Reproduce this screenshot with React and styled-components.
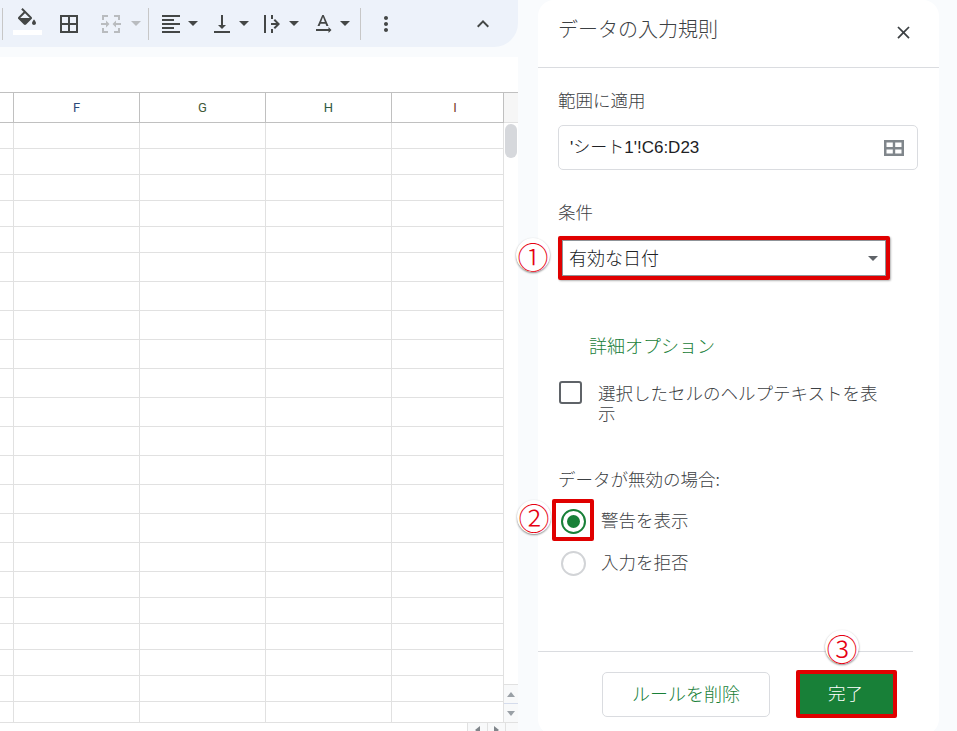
import styled, { createGlobalStyle } from "styled-components";

const COLUMNS = ["F", "G", "H", "I"];
const ROW_HEIGHTS = [
  ...Array(5).fill(26),
  ...Array(11).fill(29),
  ...Array(5).fill(26),
  21,
];
const HEADER_COLORS = { F: "#2b4a7a", G: "#3f5a3a", H: "#2f5a45", I: "#7a3b2e" };

const GlobalStyle = createGlobalStyle`
  html, body {
    margin: 0;
    height: 100%;
    overflow: hidden;
    background: #f9fbfd;
  }
  * { box-sizing: border-box; }
`;

const Page = styled.div`
  width: 957px;
  height: 731px;
  display: flex;
  overflow: hidden;
  background: #f9fbfd;
  font-family: "Liberation Sans", "Noto Sans CJK JP", sans-serif;
  color: #3c4043;
`;

const SheetColumn = styled.div`
  width: 518px;
  flex: none;
  display: flex;
  flex-direction: column;
`;

const Toolbar = styled.div`
  height: 47px;
  flex: none;
  display: flex;
  align-items: center;
  background: #edf2fa;
  border-bottom-right-radius: 24px;
  color: #444746;
`;

const Separator = styled.div`
  width: 1px;
  height: 32px;
  flex: none;
  margin-left: ${(p) => p.$ml}px;
  background: #c7c7c7;
`;

const ToolIcon = styled.svg`
  width: 24px;
  height: 24px;
  flex: none;
  margin-left: ${(p) => p.$ml}px;
  fill: currentColor;
  color: ${(p) => (p.$disabled ? "#b9bcbf" : "inherit")};
`;

const FillButton = styled.div`
  width: 29px;
  height: 47px;
  flex: none;
  margin-left: 10px;
  padding: 8px 0 0 2px;
  position: relative;
  &::after {
    content: "";
    position: absolute;
    left: 0;
    right: 0;
    top: 30px;
    height: 5px;
    background: #fff;
  }
`;

const Caret = styled.div`
  width: 0;
  height: 0;
  flex: none;
  margin-left: ${(p) => p.$ml}px;
  border-left: 5.5px solid transparent;
  border-right: 5.5px solid transparent;
  border-top: 5.5px solid ${(p) => (p.$disabled ? "#b9bcbf" : "#444746")};
`;

const ToolbarGap = styled.div`
  height: 10px;
  flex: none;
`;

const FormulaBar = styled.div`
  height: 35px;
  flex: none;
  background: #fff;
`;

const Sheet = styled.div`
  flex: 1;
  display: flex;
  flex-direction: column;
  background: #fff;
  min-height: 0;
`;

const SheetBody = styled.div`
  display: flex;
`;

const Cells = styled.div`
  width: 504px;
  flex: none;
`;

const GridRow = styled.div`
  display: grid;
  grid-template-columns: 14px 126px 126px 126px 112px;
  border-bottom: 1px solid ${(p) => (p.$head ? "#c0c0c0" : "#e1e1e1")};
`;

const HeaderRow = styled(GridRow)`
  height: 31px;
  border-top: 1px solid #c0c0c0;
`;

const Cell = styled.div`
  border-right: 1px solid ${(p) => (p.$head ? "#c0c0c0" : "#e1e1e1")};
`;

const HeaderCell = styled(Cell)`
  display: flex;
  align-items: center;
  justify-content: center;
  padding-left: ${(p) => p.$pad || 0}px;
  font-family: "Roboto", "Liberation Sans", sans-serif;
  font-size: 13px;
  color: ${(p) => p.$color};
`;

const Gutter = styled.div`
  width: 14px;
  flex: none;
  display: flex;
  flex-direction: column;
`;

const GutterHead = styled.div`
  height: 31px;
  flex: none;
  background: #f6f6f6;
  border-top: 1px solid #c0c0c0;
  border-bottom: 1px solid #e1e1e1;
`;

const Thumb = styled.div`
  width: 12px;
  height: 34px;
  margin: 1px 0 0 1px;
  border-radius: 6px;
  background: #d6d8dc;
`;

const ScrollArrows = styled.div`
  margin-top: auto;
  height: 39px;
  display: flex;
  flex-direction: column;
  background: #f8f9fa;
  border-top: 1px solid #e1e1e1;
`;

const ScrollArrow = styled.div`
  flex: 1;
  display: flex;
  align-items: center;
  justify-content: center;
  border-bottom: 1px solid ${(p) => (p.$up ? "#d5dcec" : "#e1e1e1")};
  &::before {
    content: "";
    border-left: 4px solid transparent;
    border-right: 4px solid transparent;
    ${(p) => (p.$up ? "border-bottom" : "border-top")}: 5px solid #9aa0a6;
  }
`;

const BottomBar = styled.div`
  height: 9px;
  flex: none;
  display: flex;
  justify-content: flex-end;
  background: #fff;
`;

const PageArrow = styled.div`
  width: ${(p) => p.$w}px;
  display: flex;
  justify-content: center;
  padding-top: 3px;
  background: #f8f9fa;
  border-left: 1px solid #e1e1e1;
  &::before {
    content: "";
    height: 0;
    border-top: 4px solid transparent;
    border-bottom: 4px solid transparent;
    ${(p) => (p.$left ? "border-right" : "border-left")}: 5px solid #80868b;
  }
`;

const BottomEnd = styled.div`
  width: 13px;
  background: #f8f9fa;
  border-left: 1px solid #e1e1e1;
`;

const Panel = styled.aside`
  width: 401px;
  height: 735px;
  flex: none;
  margin-left: 20px;
  display: flex;
  flex-direction: column;
  background: #fff;
  border-radius: 16px;
  font-family: "Noto Sans CJK JP", "Liberation Sans", sans-serif;
  font-size: 17.5px;
  font-weight: 300;
`;

const PanelHeader = styled.div`
  height: 68px;
  flex: none;
  display: flex;
  align-items: center;
  justify-content: space-between;
  padding: 0 25px 10px 20px;
  border-bottom: 1px solid #dadce0;
`;

const PanelTitle = styled.h2`
  margin: 0;
  font-size: 20px;
  font-weight: 300;
  line-height: 28px;
  color: #3c4043;
`;

const CloseIcon = styled.svg`
  width: 21px;
  height: 21px;
  margin-top: 7px;
  fill: #3c4043;
`;

const PanelBody = styled.div`
  padding: 19px 21px 0 20px;
  display: flex;
  flex-direction: column;
`;

const FieldLabel = styled.div`
  line-height: 26px;
  color: #3c4043;
`;

const RangeField = styled.div`
  height: 45px;
  margin-top: 12px;
  padding: 0 11px 0 11px;
  display: flex;
  align-items: center;
  justify-content: space-between;
  border: 1px solid #dadce0;
  border-radius: 5px;
  font-family: "Liberation Sans", "Noto Sans CJK JP", sans-serif;
  font-size: 17px;
  font-weight: 300;
  color: #202124;
`;

const RangeText = styled.span`
  margin-top: -4px;
`;

const RangeIcon = styled.svg`
  width: 24px;
  height: 24px;
  margin-top: 1px;
  fill: #80868b;
`;

const ConditionLabel = styled(FieldLabel)`
  margin-top: 29px;
`;

const SelectBox = styled.div`
  position: relative;
  width: 332px;
  height: 44px;
  margin-top: 11px;
  padding: 0 8px 2px 7px;
  display: flex;
  align-items: center;
  justify-content: space-between;
  border: 4px solid #e00000;
  box-shadow: 1px 1px 2px rgba(0, 0, 0, 0.3), inset 0 0 0 1px #8f9398;
  border-radius: 2px;
  font-size: 18px;
  color: #202124;
`;

const SelectCaret = styled.div`
  margin-top: 2px;
  border-left: 5.5px solid transparent;
  border-right: 5.5px solid transparent;
  border-top: 5px solid #5f6368;
`;

const Badge = styled.div`
  position: absolute;
  left: ${(p) => p.$x}px;
  top: ${(p) => p.$y}px;
  width: 34px;
  height: 34px;
  display: flex;
  align-items: center;
  justify-content: center;
  border-radius: 50%;
  background: #fff;
  box-shadow: 0 1px 2px rgba(0, 0, 0, 0.45);
  color: #e60012;
  font-family: "Noto Sans CJK JP", sans-serif;
  font-size: 31px;
  font-weight: 300;
  line-height: 1;
`;

const AdvancedLink = styled.div`
  margin: 52px 0 0 31px;
  line-height: 26px;
  font-size: 18px;
  color: #188038;
`;

const CheckRow = styled.div`
  margin-top: 21px;
  display: flex;
  gap: 16px;
`;

const CheckBox = styled.div`
  width: 23px;
  height: 23px;
  flex: none;
  margin: 2px 0 0 1px;
  border: 2px solid #5f6368;
  border-radius: 3px;
`;

const CheckText = styled.div`
  width: 290px;
  line-height: 20px;
  padding-top: 4px;
`;

const InvalidLabel = styled(FieldLabel)`
  margin-top: 43px;
`;

const RadioGroup = styled.div`
  margin-top: 16px;
  display: flex;
  flex-direction: column;
  gap: 16px;
`;

const RadioRow = styled.div`
  height: 26px;
  display: flex;
  align-items: center;
  gap: 15px;
  padding-left: 3px;
`;

const RadioText = styled.span`
  margin-top: -3px;
`;

const Radio = styled.div`
  position: relative;
  width: 25px;
  height: 25px;
  flex: none;
  display: flex;
  align-items: center;
  justify-content: center;
  border-radius: 50%;
  border: 2px solid ${(p) => (p.$checked ? "#188038" : "#d2d4d7")};
  &::before {
    content: "";
    display: ${(p) => (p.$checked ? "block" : "none")};
    width: 13px;
    height: 13px;
    border-radius: 50%;
    background: #188038;
  }
`;

const RadioMark = styled.div`
  position: absolute;
  left: -11px;
  top: -12px;
  width: 42px;
  height: 42px;
  border: 4px solid #e00000;
  border-radius: 2px;
`;

const PanelFooter = styled.div`
  position: relative;
  margin: auto 26px 0 0;
  padding: 18px 16px 17px 0;
  display: flex;
  align-items: center;
  justify-content: flex-end;
  gap: 26px;
  border-top: 1px solid #dadce0;
`;

const RemoveButton = styled.button`
  width: 168px;
  height: 45px;
  padding: 0 0 3px;
  background: #fff;
  border: 1px solid #dadce0;
  border-radius: 5px;
  font: inherit;
  font-size: 18px;
  color: #188038;
`;

const DoneButton = styled.button`
  width: 101px;
  height: 48px;
  padding: 0 2px 4px 0;
  background: #188038;
  border: 4px solid #e00000;
  border-radius: 2px;
  font: inherit;
  color: #fff;
`;

function Glyph({ d, ml, disabled }) {
  return (
    <ToolIcon viewBox="0 0 24 24" $ml={ml} $disabled={disabled}>
      <path d={d} />
    </ToolIcon>
  );
}

export default function App() {
  return (
    <Page>
      <GlobalStyle />
      <SheetColumn>
        <Toolbar>
          <Separator $ml={2} />
          <FillButton>
            <ToolIcon viewBox="0 0 24 24" $ml={0}>
              <path d="M16.56 8.94L7.62 0 6.21 1.41l2.38 2.38-5.15 5.15c-.59.59-.59 1.54 0 2.12l5.5 5.5c.29.29.68.44 1.06.44s.77-.15 1.06-.44l5.5-5.5c.59-.58.59-1.53 0-2.12zM5.21 10L10 5.21 14.79 10H5.21zM19 11.5s-2 2.17-2 3.5c0 1.1.9 2 2 2s2-.9 2-2c0-1.33-2-3.5-2-3.5z" />
            </ToolIcon>
          </FillButton>
          <Glyph ml={15} d="M3 3v18h18V3H3zm8 16H5v-6h6v6zm0-8H5V5h6v6zm8 8h-6v-6h6v6zm0-8h-6V5h6v6z" />
          <Glyph
            ml={17.5}
            disabled
            d="M3 3h6v2H5v3H3V3zm12 0h6v5h-2V5h-4V3zM3 16h2v3h4v2H3v-5zm16 0h2v5h-6v-2h4v-3zM2 11h5V8.5l3.5 3.5L7 15.500V13H2v-2zm20 0v2h-5v2.500L13.500 12 17 8.500V11h5z"
          />
          <Caret $ml={8.5} $disabled />
          <Separator $ml={7} />
          <Glyph ml={10} d="M3 3h18v2H3V3zm0 4h12v2H3V7zm0 4h18v2H3v-2zm0 4h12v2H3v-2zm0 4h18v2H3v-2z" />
          <Caret $ml={5} />
          <Glyph ml={12} d="M16 13h-3V3h-2v10H8l4 4 4-4zM4 19v2h16v-2H4z" />
          <Caret $ml={5} />
          <Glyph
            ml={11}
            d="M4 3h2v18H4V3zm7 0h2v4h-2V3zm0 14h2v4h-2v-4zm0-6h5.200l-2.600-2.600L15 7l5 5-5 5-1.400-1.400 2.600-2.600H11v-2z"
          />
          <Caret $ml={5} />
          <Glyph
            ml={12}
            d="M12.750 3h-1.500L6.500 14h2.100l.9-2.200h5l.9 2.200h2.100L12.750 3zm-2.620 7L12 4.980 13.870 10h-3.740zm10.370 8l-3-3v2H5v2h12.500v2l3-3z"
          />
          <Caret $ml={5} />
          <Separator $ml={10} />
          <Glyph
            ml={13}
            d="M12 8c1.100 0 2-.9 2-2s-.9-2-2-2-2 .9-2 2 .9 2 2 2zm0 2c-1.100 0-2 .9-2 2s.9 2 2 2 2-.9 2-2-.9-2-2-2zm0 6c-1.100 0-2 .9-2 2s.9 2 2 2 2-.9 2-2-.9-2-2-2z"
          />
          <Glyph ml={73} d="M12 8l-6 6 1.410 1.410L12 10.830l4.590 4.580L18 14z" />
        </Toolbar>
        <ToolbarGap />
        <FormulaBar />
        <Sheet>
          <SheetBody>
            <Cells>
              <HeaderRow $head>
                <Cell $head />
                {COLUMNS.map((c) => (
                  <HeaderCell key={c} $head $color={HEADER_COLORS[c]} $pad={c === "I" ? 15 : 0}>
                    {c}
                  </HeaderCell>
                ))}
              </HeaderRow>
              {ROW_HEIGHTS.map((h, i) => (
                <GridRow key={i} style={{ height: h }}>
                  <Cell />
                  {COLUMNS.map((c) => (
                    <Cell key={c} />
                  ))}
                </GridRow>
              ))}
            </Cells>
            <Gutter>
              <GutterHead />
              <Thumb />
              <ScrollArrows>
                <ScrollArrow $up />
                <ScrollArrow />
              </ScrollArrows>
            </Gutter>
          </SheetBody>
          <BottomBar>
            <PageArrow $w={20} $left />
            <PageArrow $w={18} />
            <BottomEnd />
          </BottomBar>
        </Sheet>
      </SheetColumn>

      <Panel>
        <PanelHeader>
          <PanelTitle>データの入力規則</PanelTitle>
          <CloseIcon viewBox="0 0 24 24">
            <path d="M19 6.410L17.590 5 12 10.590 6.410 5 5 6.410 10.590 12 5 17.590 6.410 19 12 13.410 17.590 19 19 17.590 13.410 12z" />
          </CloseIcon>
        </PanelHeader>
        <PanelBody>
          <FieldLabel>範囲に適用</FieldLabel>
          <RangeField>
            <RangeText>'シート1'!C6:D23</RangeText>
            <RangeIcon viewBox="0 0 24 24">
              <path d="M2 4h20v16H2V4zm2.500 2.500v4.500h6.300V6.500H4.500zm8.700 0v4.500h6.300V6.500h-6.300zm-8.700 7v4h6.300v-4H4.500zm8.700 0v4h6.300v-4h-6.300z" />
            </RangeIcon>
          </RangeField>
          <ConditionLabel>条件</ConditionLabel>
          <SelectBox>
            有効な日付
            <SelectCaret />
            <Badge $x={-46} $y={-2}>①</Badge>
          </SelectBox>
          <AdvancedLink>詳細オプション</AdvancedLink>
          <CheckRow>
            <CheckBox />
            <CheckText>選択したセルのヘルプテキストを表示</CheckText>
          </CheckRow>
          <InvalidLabel>データが無効の場合:</InvalidLabel>
          <RadioGroup>
            <RadioRow>
              <Radio $checked>
                <RadioMark />
                <Badge $x={-46} $y={-11}>②</Badge>
              </Radio>
              <RadioText>警告を表示</RadioText>
            </RadioRow>
            <RadioRow>
              <Radio />
              <RadioText>入力を拒否</RadioText>
            </RadioRow>
          </RadioGroup>
        </PanelBody>
        <PanelFooter>
          <Badge $x={287} $y={-22}>③</Badge>
          <RemoveButton>ルールを削除</RemoveButton>
          <DoneButton>完了</DoneButton>
        </PanelFooter>
      </Panel>
    </Page>
  );
}
